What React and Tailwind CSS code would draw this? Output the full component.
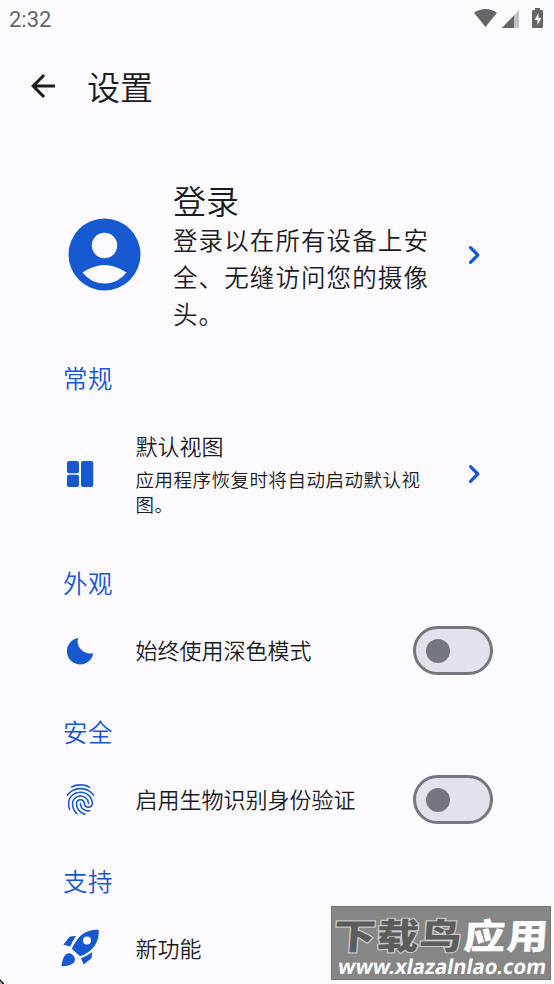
import React from "react";
import { MdFingerprint, MdArrowBack } from "react-icons/md";

const Chevron = () => (
  <svg className="h-[22px] w-[16px] text-[#1558d0]" viewBox="0 0 16 22" fill="none" stroke="currentColor" strokeWidth="3.2" strokeLinecap="round" strokeLinejoin="round">
    <path d="M4.500 3.700 11.800 11 4.500 18.300" />
  </svg>
);

const Rocket = () => (
  <svg className="h-[39px] w-[39px]" viewBox="0 0 39 39" fill="currentColor">
    <path
      fillRule="evenodd"
      d="M37.600 .8C28 .2 20.500 4.500 16 11Q13 15 11.200 18.800Q10.800 19.700 11.500 20.400L18.200 26.600Q19 27.400 20 26.900Q24.500 25.300 28.500 22.200C35.500 17 38.300 9 37.600 .8ZM26 7.400a4 4 0 1 1 0 8 4 4 0 0 1 0-8Z"
    />
    <path d="M15 7 10.500 7.200Q9 7.400 8 8.500L2.400 15.800 9.300 17.600Q11.500 12 15 7Z" />
    <path d="M31 23.300 30.800 27.500Q30.800 29 29.700 30L22.600 35.600 20 29.200Q26 27 31 23.300Z" />
    <path d="M.6 37.400Q1 32 2.500 28.800C4 25.300 7.500 23 10.800 25.200 14.400 27.800 15 32 12.200 34.300Q8.500 37 .6 37.400Z" />
  </svg>
);

const Toggle = () => (
  <div className="flex h-[49px] w-[80px] items-center rounded-full border-[3px] border-[#747780] bg-[#e1e2ec] pl-[10px]">
    <div className="size-6 rounded-full bg-[#747780]" />
  </div>
);

const Section = ({ children, className }) => (
  <h2 className={`pl-[63px] pt-px text-[24.5px] leading-[35px] tracking-[0.4px] text-[#1558d0] ${className}`}>{children}</h2>
);

const Row = ({ icon, children, action, className }) => (
  <div className={`flex items-center ${className}`}>
    <div className="ml-[56px] flex w-12 shrink-0 justify-center text-[#1558d0]">{icon}</div>
    <div className="ml-[31.5px] flex-1 pb-[3px] text-[22px] leading-[32px]">{children}</div>
    {action}
  </div>
);

export default function App() {
  return (
    <div className="relative flex h-[984px] w-[554px] flex-col overflow-hidden bg-[#fdfbff] font-['Noto_Sans_CJK_SC',sans-serif] font-[350] text-[#1b1b1f]">
      <header className="flex h-[38px] shrink-0 items-center justify-between pl-[9px] pr-[9px] text-[#666569]">
        <span className="pt-[2px] font-[Roboto,sans-serif] text-[22px] font-normal leading-[36px]">2:32</span>
        <svg className="h-[24px] w-[72px]" viewBox="0 0 72 24" fill="currentColor">
          <path d="M1 5.700C8 .7 17 .7 24 5.700L12.500 20Z" />
          <path d="M46 3v18H29Z" opacity=".38" />
          <path d="M41 8.300V21H29Z" />
          <path fillRule="evenodd" d="M60 3h2V1h5v2h2q1 0 1 1v16q0 1-1 1h-9q-1 0-1-1V4q0-1 1-1ZM65.500 6l-4 7h3v5l4-7h-3Z" />
        </svg>
      </header>

      <div className="flex h-[97px] shrink-0 items-center">
        <MdArrowBack className="mb-px ml-[25px] size-[36px] text-[#1b1b1f]" />
        <h1 className="ml-[26px] pb-[2px] text-[33px] leading-[48px]">设置</h1>
      </div>

      <div className="mt-[42px] flex h-[155px] shrink-0 items-center">
        <svg className="ml-[68px] size-[73px] shrink-0" viewBox="0 0 73 73">
          <circle cx="36.500" cy="36.500" r="36" fill="#1558d0" />
          <circle cx="36.500" cy="27.500" r="12.700" fill="#fdfbff" />
          <path d="M14.500 54.500Q36.500 39.500 58.500 54.500Q50 65.500 36.500 65.500T14.500 54.500Z" fill="#fdfbff" />
        </svg>
        <div className="ml-[32px] w-[258px] shrink-0 pt-[2px]">
          <div className="text-[33px] leading-[42px]">登录</div>
          <p className="text-[24.5px] leading-[37px] tracking-[1.1px]">登录以在所有设备上安全、无缝访问您的摄像头。</p>
        </div>
        <div className="ml-[35px]"><Chevron /></div>
      </div>

      <Section className="mt-[27px]">常规</Section>
      <Row
        className="mt-[33px] h-[92px]"
        icon={
          <svg className="size-[28px]" viewBox="0 0 28 28" fill="currentColor">
            <rect x="1" y="1" width="12" height="12.300" rx="2" />
            <rect x="1" y="14.700" width="12" height="12.300" rx="2" />
            <rect x="15" y="1" width="12.300" height="26" rx="2" />
          </svg>
        }
        action={<div className="mr-[72px]"><Chevron /></div>}
      >
        <div className="mb-[6px]">默认视图</div>
        <p className="w-[292px] text-[18.500px] leading-[25px] tracking-[0.5px]">应用程序恢复时将自动启动默认视图。</p>
      </Row>

      <Section className="mt-[44px]">外观</Section>
      <Row
        className="mt-[26px] h-[49px]"
        icon={
          <svg className="size-[28px]" viewBox="0 0 28 28" fill="currentColor">
            <path d="M12.200 1C9.500 9.500 17 18 27.300 16.200A13.300 13.300 0 1 1 12.200 1Z" />
          </svg>
        }
        action={<div className="mr-[61.5px]"><Toggle /></div>}
      >
        始终使用深色模式
      </Row>

      <Section className="mt-[38px]">安全</Section>
      <Row className="mt-[26px] h-[49px]" icon={<MdFingerprint className="size-[37px]" />} action={<div className="mr-[61.5px]"><Toggle /></div>}>
        启用生物识别身份验证
      </Row>

      <Section className="mt-[38px]">支持</Section>
      <Row className="mt-[26px] h-[49px]" icon={<Rocket />}>新功能</Row>

      <div className="absolute left-[331px] top-[906px] h-[74px] w-[220px] border border-[#747474] bg-[#868686] text-white">
        <svg className="h-[72px] w-[218px]" viewBox="0 0 218 72">
          <g fontFamily="Noto Sans CJK SC, sans-serif" fontWeight="900" transform="translate(4 0) skewX(-4) scale(1.1 .93)" fontSize="38">
            <text x="0" y="45" textLength="116" fill="#5c5c5c" stroke="#c8c8c8" strokeWidth="2.500" paintOrder="stroke">下载鸟</text>
            <text x="118" y="45" textLength="77" fill="#fff">应用</text>
          </g>
          <text x="0" y="0" transform="translate(5 67) skewX(-10)" textLength="208" lengthAdjust="spacingAndGlyphs" fill="#fff" fontFamily="Noto Sans, sans-serif" fontWeight="700" fontSize="20.500">www.xlazalnlao.com</text>
        </svg>
      </div>

      <svg className="absolute bottom-0 left-0 h-[5px] w-[5px]" viewBox="0 0 5 5">
        <path d="M0 0 4 4V5H0Z" fill="#222" />
        <path d="M0 2 2 4V5H0Z" fill="#aaa" />
      </svg>
    </div>
  );
}
